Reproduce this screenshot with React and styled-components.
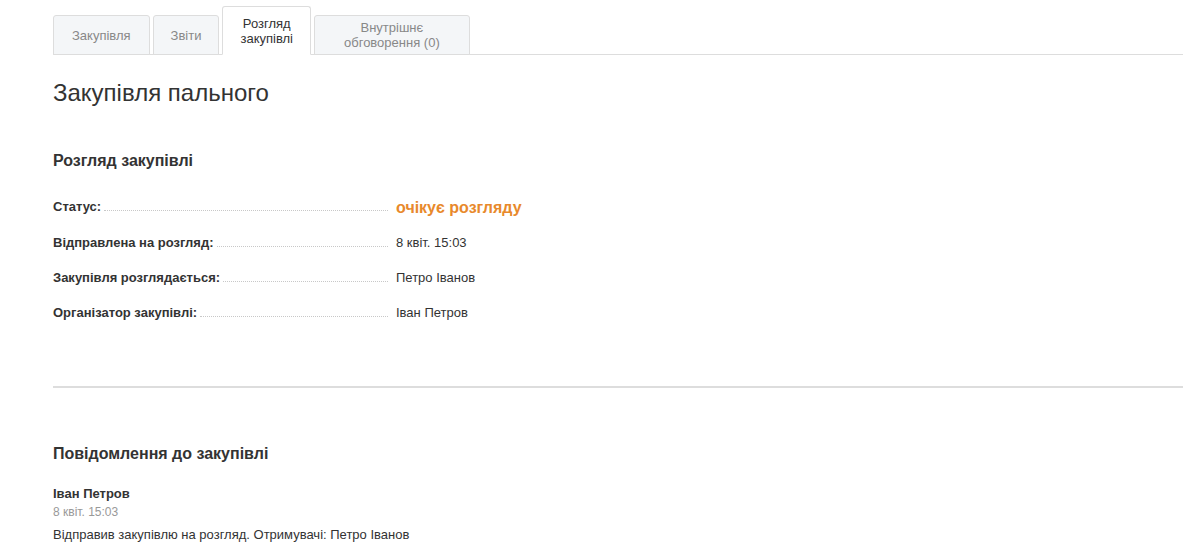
import React from 'react';
import styled, { createGlobalStyle } from 'styled-components';

const GlobalStyle = createGlobalStyle`
  body {
    margin: 0;
    background: #fff;
    font-family: "Liberation Sans", Arial, sans-serif;
    color: #333;
  }
`;

const Page = styled.div`
  padding-left: 53px;
`;

const TabBar = styled.div`
  display: flex;
  align-items: flex-end;
  gap: 3px;
  height: 54px;
  border-bottom: 1px solid #ddd;
`;

const Tab = styled.div`
  display: flex;
  align-items: center;
  justify-content: center;
  text-align: center;
  box-sizing: border-box;
  padding: 0 ${p => p.$pad || 18}px;
  height: ${p => (p.$active ? 49 : 40)}px;
  margin-bottom: -1px;
  font-size: 13px;
  line-height: 15px;
  color: ${p => (p.$active ? '#333' : '#888')};
  background: ${p => (p.$active ? '#fff' : '#f4f6f8')};
  border: 1px solid #ddd;
  border-bottom-color: ${p => (p.$active ? '#fff' : '#ddd')};
  border-radius: 3px 3px 0 0;
`;

const Title = styled.h1`
  margin: 24px 0 0;
  font-size: 24px;
  font-weight: normal;
  line-height: 28px;
  color: #333;
`;

const SectionTitle = styled.h2`
  margin: ${p => p.$top}px 0 0;
  font-size: 16px;
  font-weight: bold;
  line-height: 20px;
  color: #333;
`;

const InfoList = styled.div`
  margin-top: 26px;
  display: flex;
  flex-direction: column;
  gap: 18px;
`;

const InfoRow = styled.div`
  display: flex;
  align-items: baseline;
  height: 17px;
  margin-bottom: ${p => (p.$status ? 3 : 0)}px;
`;

const Label = styled.div`
  display: flex;
  align-items: baseline;
  width: 343px;
  flex-shrink: 0;
  font-size: 13px;
  font-weight: bold;
  color: #333;
  white-space: nowrap;
`;

const Leader = styled.span`
  flex: 1;
  margin: 0 8px 0 3px;
  border-bottom: 1px dotted #c8c8c8;
`;

const Value = styled.div`
  font-size: ${p => (p.$status ? 16 : 13)}px;
  font-weight: ${p => (p.$status ? 'bold' : 'normal')};
  color: ${p => (p.$status ? '#e8892b' : '#333')};
  position: relative;
  top: ${p => (p.$status ? 2 : 0)}px;
`;

const Divider = styled.hr`
  margin: 64px 0 0;
  border: 0;
  border-top: 2px solid #ddd;
`;

const Message = styled.div`
  margin-top: 21px;
  display: flex;
  flex-direction: column;
`;

const Author = styled.div`
  font-size: 13px;
  font-weight: bold;
  line-height: 18px;
  color: #333;
`;

const Time = styled.div`
  font-size: 12px;
  line-height: 18px;
  color: #999;
`;

const Text = styled.div`
  margin-top: 5px;
  font-size: 13px;
  line-height: 17px;
  color: #333;
`;

const rows = [
  { label: 'Статус:', value: 'очікує розгляду', status: true },
  { label: 'Відправлена на розгляд:', value: '8 квіт. 15:03' },
  { label: 'Закупівля розглядається:', value: 'Петро Іванов' },
  { label: 'Організатор закупівлі:', value: 'Іван Петров' },
];

export default function App() {
  return (
    <>
      <GlobalStyle />
      <Page>
        <TabBar>
          <Tab>Закупівля</Tab>
          <Tab $pad={17}>Звіти</Tab>
          <Tab $active $pad={17}>Розгляд<br />закупівлі</Tab>
          <Tab $pad={29}>Внутрішнє<br />обговорення (0)</Tab>
        </TabBar>
        <Title>Закупівля пального</Title>
        <SectionTitle $top={44}>Розгляд закупівлі</SectionTitle>
        <InfoList>
          {rows.map(r => (
            <InfoRow key={r.label} $status={r.status}>
              <Label>
                {r.label}
                <Leader />
              </Label>
              <Value $status={r.status}>{r.value}</Value>
            </InfoRow>
          ))}
        </InfoList>
        <Divider />
        <SectionTitle $top={56}>Повідомлення до закупівлі</SectionTitle>
        <Message>
          <Author>Іван Петров</Author>
          <Time>8 квіт. 15:03</Time>
          <Text>Відправив закупівлю на розгляд. Отримувачі: Петро Іванов</Text>
        </Message>
      </Page>
    </>
  );
}
